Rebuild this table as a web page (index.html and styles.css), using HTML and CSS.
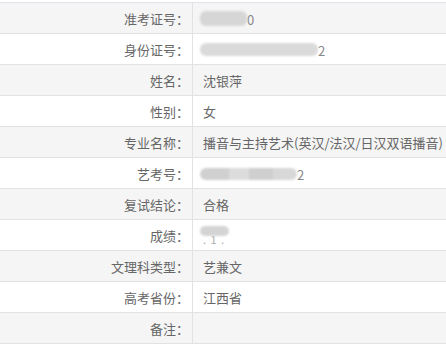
FILE: index.html
```html
<!DOCTYPE html>
<html lang="zh-CN">
<head>
<meta charset="utf-8">
<link rel="stylesheet" href="styles.css">
</head>
<body>
<table class="info">
  <tr class="odd"><th>准考证号：</th><td><span class="blur b1"></span><span class="tail">0</span></td></tr>
  <tr><th>身份证号：</th><td><span class="blur b2"></span><span class="tail">2</span></td></tr>
  <tr class="odd"><th>姓名：</th><td>沈银萍</td></tr>
  <tr><th>性别：</th><td>女</td></tr>
  <tr class="odd"><th>专业名称：</th><td>播音与主持艺术(英汉/法汉/日汉双语播音)</td></tr>
  <tr><th>艺考号：</th><td><span class="blur b3"></span><span class="tail">2</span></td></tr>
  <tr class="odd"><th>复试结论：</th><td>合格</td></tr>
  <tr><th>成绩：</th><td><span class="score"><span class="dots">. 1 .</span><span class="blur b4"></span></span></td></tr>
  <tr class="odd"><th>文理科类型：</th><td>艺兼文</td></tr>
  <tr><th>高考省份：</th><td>江西省</td></tr>
  <tr class="odd"><th>备注：</th><td></td></tr>
</table>
</body>
</html>
```
FILE: styles.css
```css
html, body {
  margin: 0;
  padding: 0;
  background: #ffffff;
}
body {
  padding-top: 2px;
  overflow: hidden;
  width: 446px;
}
.info {
  border-collapse: collapse;
  width: 446px;
  table-layout: fixed;
  border-top: 1px solid #dfe3ea;
  font-family: "Noto Sans CJK SC", "Noto Sans", sans-serif;
  font-size: 13px;
  color: #666666;
}
.info tr {
  height: 31px;
  border-bottom: 1px solid #e2e2e2;
}
.info tr.odd {
  background: #f5f5f5;
}
.info th {
  width: 189px;
  padding: 0 3px 0 0;
  text-align: right;
  font-weight: normal;
  border-right: 1px solid #e2e2e2;
  white-space: nowrap;
}
.info td {
  padding: 0 0 0 10px;
  white-space: nowrap;
  overflow: hidden;
}
.blur {
  display: inline-block;
  vertical-align: middle;
  height: 13px;
  background: #d6d6d6;
  border-radius: 6px;
  filter: blur(1.3px);
}
.b1 { width: 47px; margin-left: -3px; height: 15px; }
.b2 { width: 118px; margin-left: -3px; background: #dadada; }
.b3 { width: 97px; margin-left: -3px; height: 12px; background: linear-gradient(90deg, #d0d0d0 0 30%, #dcdcdc 30% 50%, #cfcfcf 50% 75%, #d8d8d8 75%); }
.b4 { width: 29px; height: 10px; position: absolute; left: -3px; top: 2px; background: #d4d4d4; }
.tail {
  vertical-align: middle;
  color: #888;
  margin-left: 0;
}
.score {
  position: relative;
  display: inline-block;
  vertical-align: middle;
  height: 22px;
}
.dots {
  display: inline-block;
  color: #aaa;
  font-size: 11px;
  letter-spacing: 1px;
  padding-top: 8px;
  line-height: 14px;
}
```
